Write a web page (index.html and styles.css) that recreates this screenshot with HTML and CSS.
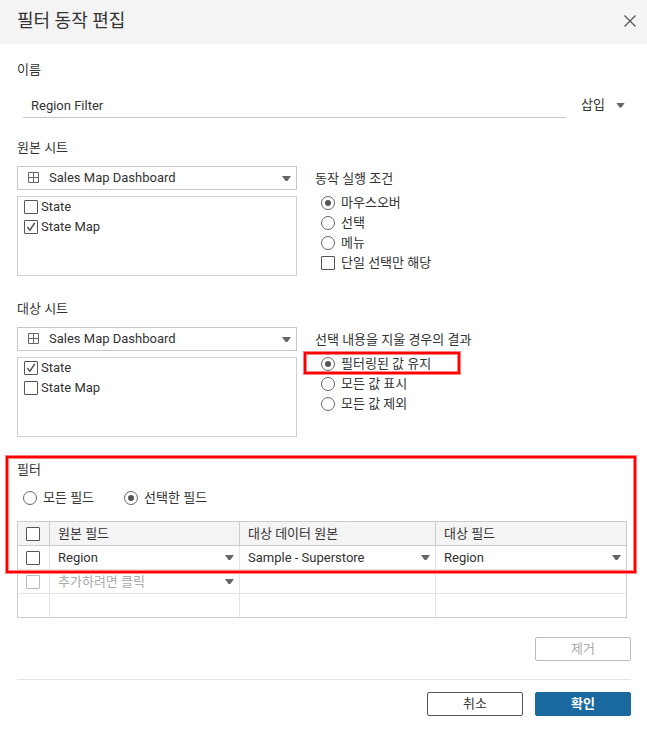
FILE: index.html
```
<!DOCTYPE html>
<html lang="ko">
<head>
    <meta charset="utf-8">
    <title>필터 동작 편집</title>
    <link rel="stylesheet" href="styles.css">
</head>
<body>
    <header class="dialog-header">
        <h1>필터 동작 편집</h1>
        <button type="button" class="close" aria-label="닫기">
            <svg width="12" height="12" viewBox="0 0 12 12"><path d="M0.5 0.5l11 11M11.5 0.5l-11 11" fill="none" stroke="#555" stroke-width="1.2"/></svg>
        </button>
    </header>

    <main class="dialog-body">
        <section class="name-section">
            <h2><label for="actionName">이름</label></h2>
            <div class="name-row">
                <input type="text" id="actionName" class="name-input" value="Region Filter">
                <button type="button" class="insert">삽입</button>
            </div>
        </section>

        <section class="sheet-section">
            <h2>원본 시트</h2>
            <div class="sheet-grid">
                <div class="sheet-picker">
                    <div class="combo">
                        <svg class="sheet-icon" width="11" height="11" viewBox="0 0 11 11"><path d="M0.5 0.5h10v10h-10zM5.5 0.5v10M0.5 5.5h10" fill="none" stroke="#666"/></svg>
                        <select aria-label="원본 시트"><option>Sales Map Dashboard</option></select>
                    </div>
                    <div class="sheet-list">
                        <label><input type="checkbox">State</label>
                        <label><input type="checkbox" checked>State Map</label>
                    </div>
                </div>
                <fieldset class="options">
                    <legend>동작 실행 조건</legend>
                    <label><input type="radio" name="run" checked>마우스오버</label>
                    <label><input type="radio" name="run">선택</label>
                    <label><input type="radio" name="run">메뉴</label>
                    <label><input type="checkbox">단일 선택만 해당</label>
                </fieldset>
            </div>
        </section>

        <section class="sheet-section">
            <h2>대상 시트</h2>
            <div class="sheet-grid">
                <div class="sheet-picker">
                    <div class="combo">
                        <svg class="sheet-icon" width="11" height="11" viewBox="0 0 11 11"><path d="M0.5 0.5h10v10h-10zM5.5 0.5v10M0.5 5.5h10" fill="none" stroke="#666"/></svg>
                        <select aria-label="대상 시트"><option>Sales Map Dashboard</option></select>
                    </div>
                    <div class="sheet-list">
                        <label><input type="checkbox" checked>State</label>
                        <label><input type="checkbox">State Map</label>
                    </div>
                </div>
                <fieldset class="options">
                    <legend>선택 내용을 지울 경우의 결과</legend>
                    <label class="marked"><input type="radio" name="clear" checked>필터링된 값 유지<span class="mark mark-option"></span></label>
                    <label><input type="radio" name="clear">모든 값 표시</label>
                    <label><input type="radio" name="clear">모든 값 제외</label>
                </fieldset>
            </div>
        </section>

        <section class="filter-section">
            <h2>필터</h2>
            <div class="field-choice">
                <label><input type="radio" name="fields">모든 필드</label>
                <label><input type="radio" name="fields" checked>선택한 필드</label>
            </div>
            <table class="field-table">
                <colgroup>
                    <col class="col-check">
                    <col class="col-source">
                    <col class="col-data">
                    <col class="col-target">
                </colgroup>
                <thead>
                    <tr>
                        <th class="check"><input type="checkbox" aria-label="모두 선택"></th>
                        <th>원본 필드</th>
                        <th>대상 데이터 원본</th>
                        <th>대상 필드</th>
                    </tr>
                </thead>
                <tbody>
                    <tr>
                        <td class="check"><input type="checkbox" aria-label="Region"></td>
                        <td><div class="cell-combo"><select aria-label="원본 필드"><option>Region</option></select></div></td>
                        <td><div class="cell-combo"><select aria-label="대상 데이터 원본"><option>Sample - Superstore</option></select></div></td>
                        <td><div class="cell-combo"><select aria-label="대상 필드"><option>Region</option></select></div></td>
                    </tr>
                    <tr>
                        <td class="check"><input type="checkbox" aria-label="새 필드" disabled></td>
                        <td><div class="cell-combo"><select class="placeholder" aria-label="새 원본 필드"><option>추가하려면 클릭</option></select></div></td>
                        <td></td>
                        <td></td>
                    </tr>
                    <tr>
                        <td></td>
                        <td></td>
                        <td></td>
                        <td></td>
                    </tr>
                </tbody>
            </table>
            <div class="mark mark-filter"></div>
            <div class="buttons">
                <button type="button" class="btn" disabled>제거</button>
            </div>
        </section>

        <footer class="buttons dialog-footer">
            <button type="button" class="btn">취소</button>
            <button type="submit" class="btn btn-primary">확인</button>
        </footer>
    </main>
</body>
</html>
```
FILE: styles.css
```
* {
    box-sizing: border-box;
}

body {
    margin: 0;
    background-color: #fff;
    color: #333;
    font-family: Roboto, "Noto Sans CJK KR", sans-serif;
    font-size: 13px;
    line-height: 20px;
}

button,
input,
select {
    margin: 0;
    font: inherit;
    color: inherit;
}

.dialog-header {
    display: flex;
    justify-content: space-between;
    align-items: center;
    height: 44px;
    padding: 0 11px 2px 17px;
    background-color: #f4f4f4;
}

h1 {
    margin: 0;
    font-size: 18px;
    font-weight: 400;
    line-height: 24px;
}

.close {
    display: flex;
    padding: 0;
    border: none;
    background: none;
    cursor: pointer;
}

.dialog-body {
    padding: 16px 16px 16px 17px;
}

h2 {
    margin: 0 0 8px;
    font-size: 13px;
    font-weight: 400;
}

/* Name */
.name-section {
    margin-bottom: 20px;
}

.name-row {
    display: flex;
    gap: 15px;
    margin: 14px 0 0 6px;
}

.name-input {
    flex: 1;
    min-width: 0;
    height: 24px;
    padding: 0 8px;
    border: none;
    border-bottom: 1px solid #c8c8c8;
    outline: none;
}

.insert {
    display: flex;
    justify-content: space-between;
    align-items: center;
    width: 50px;
    height: 22px;
    padding: 0 6px 0 0;
    border: none;
    background: none;
    cursor: pointer;
}

/* Drop-down arrows */
.insert::after,
.combo::after,
.cell-combo::after {
    content: "";
    width: 9px;
    height: 5px;
    background-color: #666;
    clip-path: polygon(0 0, 100% 0, 60% 100%, 40% 100%);
}

.combo::after,
.cell-combo::after {
    position: absolute;
    top: 9px;
    right: 5px;
    pointer-events: none;
}

select {
    appearance: none;
    width: 100%;
    border: none;
    background: none;
    outline: none;
}

/* Source and target sheets */
.sheet-section {
    margin-bottom: 23px;
}

.sheet-grid {
    display: grid;
    grid-template-columns: minmax(0, 280px) 1fr;
    gap: 18px;
}

.combo {
    position: relative;
    height: 24px;
    margin-bottom: 6px;
    border: 1px solid #c8c8c8;
}

.combo select {
    height: 22px;
    padding: 0 20px 0 31px;
}

.sheet-icon {
    position: absolute;
    top: 5px;
    left: 10px;
}

.sheet-list {
    height: 80px;
    padding: 0 6px;
    border: 1px solid #d0d0d0;
}

label input {
    flex: none;
}

.sheet-list label,
.options label,
.field-choice label {
    display: flex;
    align-items: center;
}

.sheet-list label {
    gap: 3px;
}

.options {
    min-width: 0;
    margin: 0;
    padding: 3px 0 0;
    border: none;
}

.options legend {
    float: left;
    width: 100%;
    margin-bottom: 4px;
    padding: 0;
}

.options label {
    clear: both;
    gap: 6px;
    padding-left: 6px;
}

/* Check boxes and radio buttons */
input[type="checkbox"],
input[type="radio"] {
    appearance: none;
    display: grid;
    place-content: center;
    width: 14px;
    height: 14px;
    border: 1px solid #555;
    border-radius: 1px;
    background-color: #fff;
}

input[type="radio"] {
    border-color: #666;
    border-radius: 50%;
}

input[type="checkbox"]:checked::before {
    content: "";
    width: 10px;
    height: 10px;
    background-color: #555;
    clip-path: polygon(8% 54%, 20% 46%, 38% 70%, 80% 4%, 94% 12%, 40% 94%);
}

input[type="radio"]:checked::before {
    content: "";
    width: 6px;
    height: 6px;
    border-radius: 50%;
    background-color: #555;
}

input[type="checkbox"]:disabled {
    border-color: #bbb;
}

/* Filter */
.filter-section {
    position: relative;
}

.field-choice {
    display: flex;
    gap: 30px;
    margin-bottom: 13px;
    padding-left: 6px;
}

.field-choice label {
    gap: 6px;
}

.field-table {
    width: calc(100% - 4px);
    table-layout: fixed;
    border-collapse: collapse;
    border: 1px solid #ccc;
}

.col-check {
    width: 32px;
}

.col-source {
    width: 190px;
}

.col-data {
    width: 196px;
}

.field-table th,
.field-table td {
    height: 24px;
    padding: 0;
    border: 1px solid #e4e4e4;
}

.field-table th {
    padding-left: 8px;
    border-color: #ccc;
    background-color: #f4f4f4;
    font-weight: 400;
    line-height: 22px;
    text-align: left;
}

.field-table tr > :first-child {
    border-left-color: #ccc;
}

.field-table tr > :last-child {
    border-right-color: #ccc;
}

.field-table tbody tr:last-child td {
    border-bottom-color: #ccc;
}

.field-table .check {
    padding-left: 8px;
}

.cell-combo {
    position: relative;
}

.cell-combo select {
    display: block;
    height: 23px;
    padding: 0 20px 0 8px;
}

.placeholder {
    color: #aaa;
}

/* Red highlight frames */
.marked {
    position: relative;
}

.mark {
    position: absolute;
    border: 2px solid #f00;
    box-shadow: 0 0 0 1px #ff8080, inset 0 0 0 1px #ff8080;
    pointer-events: none;
}

.mark-option {
    top: -2px;
    left: -11px;
    width: 156px;
    height: 22px;
}

.mark-filter {
    top: -4px;
    right: -5px;
    left: -11px;
    height: 117px;
}

/* Buttons */
.buttons {
    display: flex;
    justify-content: flex-end;
    gap: 12px;
    margin-top: 18px;
}

.field-table + .mark + .buttons {
    margin-top: 19px;
}

.dialog-footer {
    padding-top: 12px;
    border-top: 1px solid #e2e2e2;
}

.btn {
    width: 96px;
    height: 24px;
    padding: 0;
    border: 1px solid #555;
    border-radius: 2px;
    background-color: #fff;
    line-height: 20px;
    cursor: pointer;
}

.btn:disabled {
    border-color: #bbb;
    color: #aaa;
    cursor: default;
}

.btn-primary {
    border-color: #1a699e;
    background-color: #1a699e;
    color: #fff;
    font-weight: 700;
}
```
